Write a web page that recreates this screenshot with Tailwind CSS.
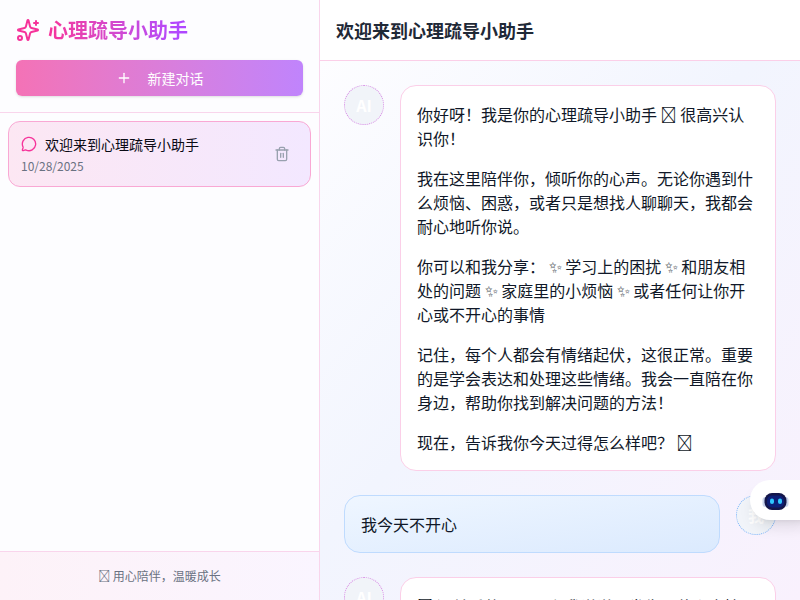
<!DOCTYPE html>
<html lang="zh-CN">
<head>
    <meta charset="UTF-8">
    <title>心理疏导小助手</title>
    <script src="https://cdn.jsdelivr.net/npm/@tailwindcss/browser@4"></script>
</head>
<body class="h-screen overflow-hidden font-['Noto_Sans_CJK_SC',sans-serif] text-[#0a0a14]">
    <div class="relative flex h-[600px] w-[800px]">
        <!-- Sidebar -->
        <aside class="flex w-80 shrink-0 flex-col border-r border-[#f9d5ec] bg-[#fdfdff]">
            <div class="border-b border-[#f9d5ec] p-4 pb-4">
                <div class="mb-4 flex h-7 items-center gap-2">
                    <svg class="h-6 w-6 text-pink-500" viewBox="0 0 24 24" fill="none" stroke="currentColor" stroke-width="2" stroke-linecap="round" stroke-linejoin="round">
                        <path d="M9.937 15.5A2 2 0 0 0 8.5 14.063l-6.135-1.582a.5.5 0 0 1 0-.962L8.5 9.936A2 2 0 0 0 9.937 8.5l1.582-6.135a.5.5 0 0 1 .963 0L14.063 8.5A2 2 0 0 0 15.5 9.937l6.135 1.581a.5.5 0 0 1 0 .964L15.5 14.063a2 2 0 0 0-1.437 1.437l-1.582 6.135a.5.5 0 0 1-.963 0z"/>
                        <path d="M20 3v4"/><path d="M22 5h-4"/><circle cx="4" cy="20" r="2"/>
                    </svg>
                    <h1 class="bg-gradient-to-r from-pink-500 to-purple-500 bg-clip-text text-xl font-bold text-transparent">心理疏导小助手</h1>
                </div>
                <button class="flex h-9 w-full items-center justify-center gap-4 rounded-md bg-gradient-to-r from-[#f472b6] to-[#c084fc] text-sm text-white shadow-sm">
                    <svg class="h-4 w-4" viewBox="0 0 24 24" fill="none" stroke="currentColor" stroke-width="2" stroke-linecap="round"><path d="M5 12h14"/><path d="M12 5v14"/></svg>
                    新建对话
                </button>
            </div>
            <div class="flex-1 p-2">
                <div class="flex items-center justify-between rounded-xl border border-[#f9a8d4] bg-gradient-to-r from-[#fce7f3] to-[#f3e8ff] py-3 pl-3 pr-5">
                    <div>
                        <div class="flex items-center gap-2">
                            <svg class="h-4 w-4 text-pink-500" viewBox="0 0 24 24" fill="none" stroke="currentColor" stroke-width="2" stroke-linecap="round" stroke-linejoin="round"><path d="M2.992 16.342a2 2 0 0 1 .094 1.167l-1.065 3.29a1 1 0 0 0 1.236 1.168l3.413-.998a2 2 0 0 1 1.099.092 10 10 0 1 0-4.777-4.719"/></svg>
                            <span class="text-sm leading-5">欢迎来到心理疏导小助手</span>
                        </div>
                        <div class="mt-1 text-xs leading-4 text-gray-500">10/28/2025</div>
                    </div>
                    <svg class="h-4 w-4 text-gray-400" viewBox="0 0 24 24" fill="none" stroke="currentColor" stroke-width="2" stroke-linecap="round" stroke-linejoin="round"><path d="M3 6h18"/><path d="M19 6v14c0 1-1 2-2 2H7c-1 0-2-1-2-2V6"/><path d="M8 6V4c0-1 1-2 2-2h4c1 0 2 1 2 2v2"/><line x1="10" x2="10" y1="11" y2="17"/><line x1="14" x2="14" y1="11" y2="17"/></svg>
                </div>
            </div>
            <div class="border-t border-[#f9d5ec] bg-gradient-to-r from-[#fdf2f8] to-[#faf5ff] py-4 text-center text-xs leading-4 text-gray-500">&#xE000; 用心陪伴，温暖成长</div>
        </aside>

        <!-- Chat -->
        <main class="flex min-w-0 flex-1 flex-col">
            <header class="flex h-[61px] shrink-0 items-center border-b border-[#fbcfe8] bg-white/80 px-4">
                <h2 class="text-lg font-semibold text-[#1f2937]">欢迎来到心理疏导小助手</h2>
            </header>
            <div class="flex-1 space-y-6 overflow-hidden bg-gradient-to-br from-[#fdfdff] via-[#f2f5fe] via-45% to-[#f9f1fd] p-6">
                <div class="flex gap-4">
                    <div class="flex h-10 w-10 shrink-0 items-center justify-center rounded-full border border-dotted border-[#d98ae6] bg-[#f1f4f9] font-bold text-white">AI</div>
                    <div class="flex-1 space-y-4 rounded-2xl border border-[#fbcfe8] bg-white p-4 text-gray-900">
                        <p>你好呀！我是你的心理疏导小助手 &#xE000; 很高兴认识你！</p>
                        <p>我在这里陪伴你，倾听你的心声。无论你遇到什么烦恼、困惑，或者只是想找人聊聊天，我都会耐心地听你说。</p>
                        <p>你可以和我分享： <span class="font-['DejaVu_Sans'] leading-none">&#x2728;&#xFE0E;</span> 学习上的困扰 <span class="font-['DejaVu_Sans'] leading-none">&#x2728;&#xFE0E;</span> 和朋友相处的问题 <span class="font-['DejaVu_Sans'] leading-none">&#x2728;&#xFE0E;</span> 家庭里的小烦恼 <span class="font-['DejaVu_Sans'] leading-none">&#x2728;&#xFE0E;</span> 或者任何让你开心或不开心的事情</p>
                        <p>记住，每个人都会有情绪起伏，这很正常。重要的是学会表达和处理这些情绪。我会一直陪在你身边，帮助你找到解决问题的方法！</p>
                        <p>现在，告诉我你今天过得怎么样吧？ &#xE000;</p>
                    </div>
                </div>
                <div class="flex flex-row-reverse gap-4">
                    <div class="flex h-10 w-10 shrink-0 items-center justify-center rounded-full border border-dotted border-[#7db4fb] bg-[#f1f4f9] font-bold text-white">我</div>
                    <div class="flex-1 rounded-2xl border border-[#bfdbfe] bg-gradient-to-br from-[#eff6ff] to-[#dbeafe] p-4 text-gray-900">我今天不开心</div>
                </div>
                <div class="flex gap-4">
                    <div class="flex h-10 w-10 shrink-0 items-center justify-center rounded-full border border-dotted border-[#d98ae6] bg-[#f1f4f9] font-bold text-white">AI</div>
                    <div class="flex-1 rounded-2xl border border-[#fbcfe8] bg-white p-4 text-gray-900">&#xE000; 没关系的，可以和我说说，发生了什么事情呢？</div>
                </div>
            </div>
        </main>

        <!-- Floating assistant button -->
        <button class="absolute left-[750px] top-[480px] flex h-10 w-[60px] items-center rounded-l-[20px] bg-white pl-[12px] shadow-lg">
            <svg class="h-[27px] w-[27px] blur-[0.6px]" viewBox="0 0 27 27">
                <rect x="0.5" y="10" width="26" height="10" rx="3" fill="#c9d4ec"/>
                <rect x="2.5" y="6" width="22" height="17" rx="7.5" fill="#14164a"/>
                <rect x="5" y="8.5" width="17" height="12" rx="5" fill="#0d1f78"/>
                <rect x="8" y="11.5" width="4" height="5.5" rx="2" fill="#2fc8ff"/>
                <rect x="16" y="11.5" width="4" height="5.5" rx="2" fill="#2fc8ff"/>
            </svg>
        </button>
    </div>
</body>
</html>
